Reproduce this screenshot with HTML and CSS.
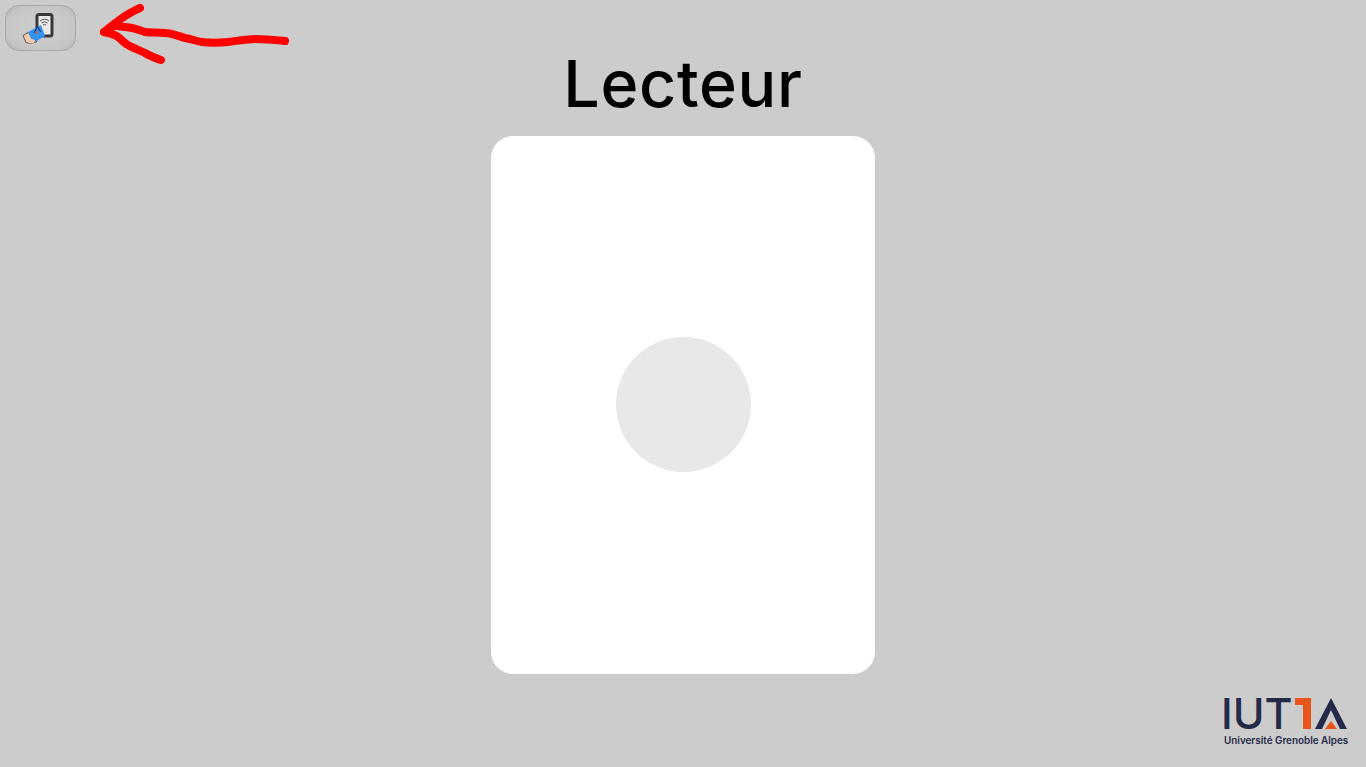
FILE: index.html
```html
<!DOCTYPE html>
<html lang="fr">
<head>
<meta charset="utf-8">
<title>Lecteur</title>
<link rel="stylesheet" href="styles.css">
</head>
<body>
<button class="reader-btn" type="button" aria-label="Lecteur">
  <svg class="reader-icon" width="36" height="34" viewBox="0 0 36 34">
    <rect x="15" y="1.5" width="15" height="21.500" rx="2" fill="#e9e9e9" stroke="#383838" stroke-width="3"/>
    <g fill="none" stroke="#555" stroke-width="1">
      <path d="M18 8q4.500-3.500 9 0"/>
      <path d="M19.500 10q3-2.500 6 0"/>
      <path d="M21 12q1.500-1.200 3 0"/>
    </g>
    <path d="M1 22.500L6 19.500 11 25 15 26 14.500 29 8 30.500 4 29.500z" fill="#f6cbb0" stroke="#4a3026" stroke-width=".8"/>
    <path d="M6 19L19 12 23 23 11 30z" fill="#3393f0"/>
    <path d="M12.300 19.700L15.300 13.700 18.700 18.700" fill="none" stroke="#1c3f6e" stroke-width="1.300"/>
    <path d="M13.200 20.500L15 17.800 16.500 20z" fill="#e8551c"/>
    <path d="M5 27L10 26 13 27 12 30 7 30.500z" fill="#f6cbb0"/>
  </svg>
</button>
<svg class="arrow" width="200" height="70" viewBox="95 0 200 70">
  <path class="arrow-line" d="M285 41C275 40 265 39 255 39C245 39 238 41 228 42C218 43 209 43 202 42C195 41 192 39 185 38C178 36 172 33 165 33C157 32 151 33 145 32C141 31 137 29 132 28C127 27 123 27 118 26C113 25 108 29 104 32M104 32C110 27 118 21 125 16C130 13 135 10 140 8M104 32C109 33 114 34 118 37C122 40 124 43 128 45C133 48 139 50 145 53C150 56 155 58 161 60"/>
</svg>
<main class="page">
  <h1 class="title">Lecteur</h1>
  <section class="card">
    <div class="dot"></div>
  </section>
</main>
<div class="logo">
  <div class="logo-mark">
    <span class="logo-iut">IUT</span>
    <svg class="logo-one" width="16" height="31" viewBox="0 0 16 31"><path d="M0 0H16V31H8V7H0z" fill="#e8541a"/></svg>
    <svg class="logo-a" width="32" height="31" viewBox="0 0 32 31"><path d="M16 0L32 31H25L16 12 7 31H0z" fill="#252a48"/><path d="M16 23L22 31H10z" fill="#e8541a"/></svg>
  </div>
  <div class="logo-sub">Université Grenoble Alpes</div>
</div>
</body>
</html>
```
FILE: styles.css
```css
html, body {
  margin: 0;
  height: 100%;
}
body {
  background: #cccccc;
  font-family: "Inter", "Open Sans", sans-serif;
  overflow: hidden;
}
.page {
  display: flex;
  flex-direction: column;
  align-items: center;
}
.title {
  margin: 46px 0 0;
  height: 90px;
  font-size: 64.500px;
  line-height: 76px;
  font-weight: 500;
  letter-spacing: 0.7px;
  color: #000;
}
.card {
  box-sizing: border-box;
  width: 384px;
  height: 538px;
  padding-bottom: 2px;
  background: #fff;
  border-radius: 22px;
  display: flex;
  align-items: center;
  justify-content: center;
}
.dot {
  width: 135px;
  height: 135px;
  border-radius: 50%;
  background: #e8e8e8;
}
.reader-btn {
  position: absolute;
  left: 5px;
  top: 5px;
  width: 71px;
  height: 46px;
  padding: 0;
  border: 1px solid #a6a6a6;
  border-radius: 14px;
  background: radial-gradient(ellipse at center, #cfcfcf 0%, #c6c6c6 70%, #b8b8b8 100%);
}
.reader-icon {
  position: absolute;
  left: 16px;
  top: 7px;
}
.arrow {
  position: absolute;
  left: 95px;
  top: 0;
}
.arrow-line {
  fill: none;
  stroke: #fe0000;
  stroke-width: 8;
  stroke-linecap: round;
  stroke-linejoin: round;
}
.logo {
  position: absolute;
  left: 1224px;
  top: 698px;
  width: 126px;
  color: #252a48;
}
.logo-mark {
  display: flex;
  align-items: flex-end;
  height: 31px;
}
.logo-iut {
  font-size: 43px;
  line-height: 31px;
  font-weight: 500;
  width: 71px;
  margin-left: -3px;
  margin-right: 3px;
  white-space: nowrap;
}
.logo-a {
  margin-left: 4px;
}
.logo-sub {
  margin-top: 5px;
  font-size: 9.900px;
  font-weight: 600;
  line-height: 13px;
  white-space: nowrap;
}
```
